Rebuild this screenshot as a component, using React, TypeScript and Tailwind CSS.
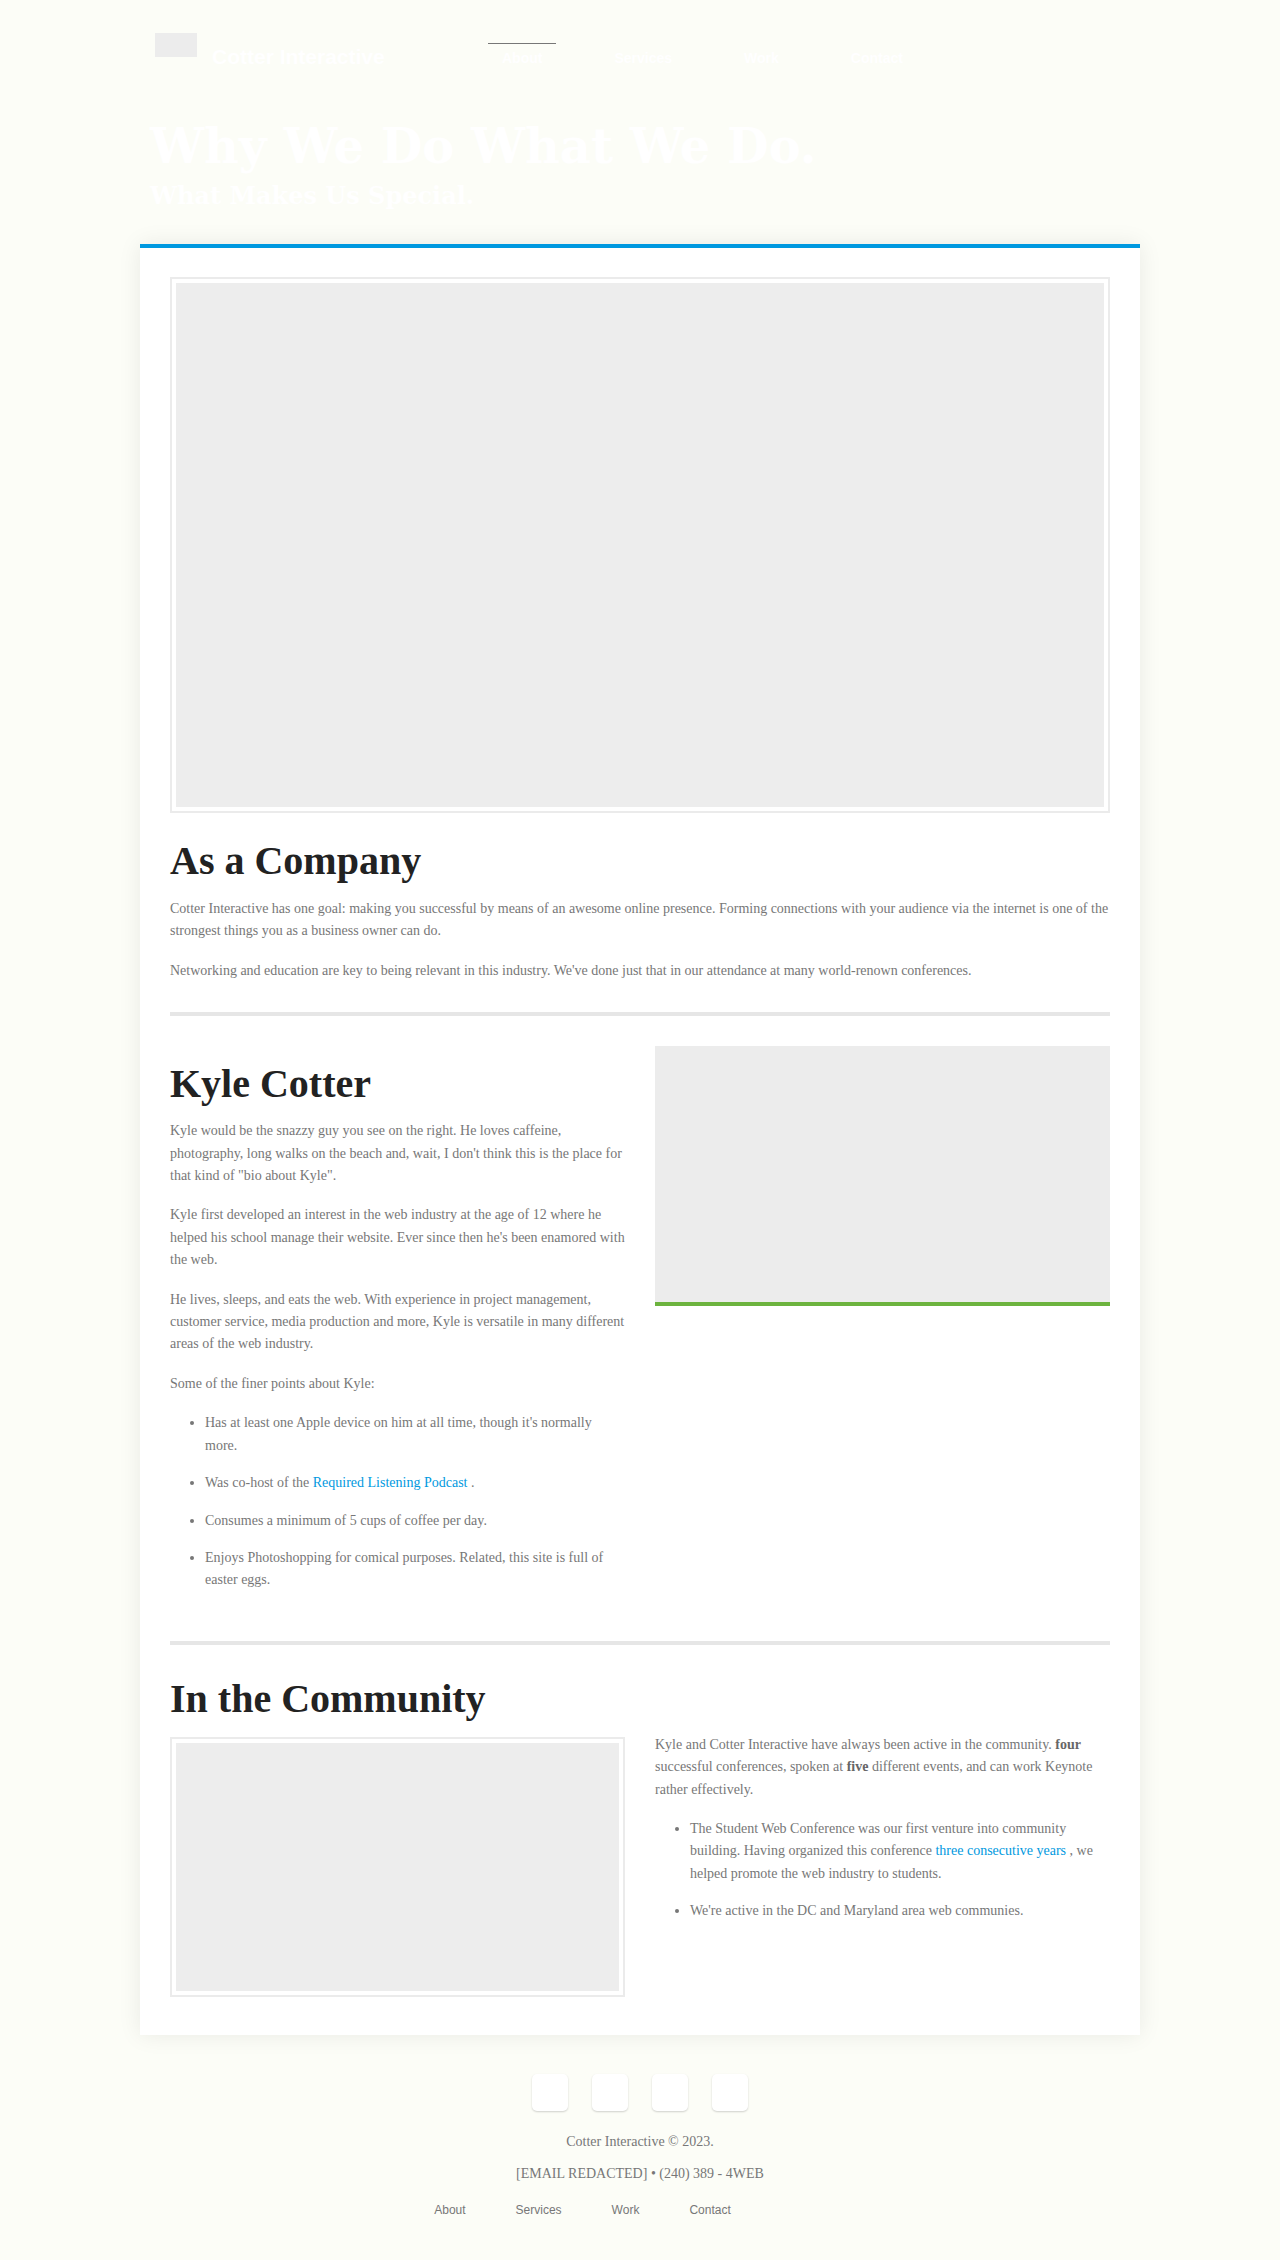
import React from "react";

const navItems = ["About", "Services", "Work", "Contact"];

const para = "text-[14px] leading-[22.4px] text-[#777]";
const heading = "text-[40px] leading-[48px] font-bold text-[#222]";

const Frame: React.FC<{ h: string }> = ({ h }) => (
  <div className="border-2 border-[#ebebeb] bg-white p-1">
    <div className={`${h} w-full bg-[#ededed]`}></div>
  </div>
);

const App: React.FC = () => {
  return (
    <div className="min-h-screen bg-[#fcfdf7] font-['Liberation_Serif',serif]">
      {/* header */}
      <header className="mx-auto flex h-[70px] w-[1000px] items-start pt-[33px] pl-[15px]">
        <div className="h-[24px] w-[42px] bg-[#ececec]"></div>
        <span className="ml-[15px] mt-[12px] w-[208px] font-['Liberation_Sans',sans-serif] text-[21px] font-bold leading-[24px] text-white">
          Cotter Interactive
        </span>
        <nav className="ml-[68px] mt-[10px] flex gap-[44px] font-['Liberation_Sans',sans-serif] text-[14px] font-bold leading-[16px] text-white">
          {navItems.map((item, i) => (
            <a
              key={item}
              className={
                i === 0
                  ? "border-t border-[#777] px-[14px] pt-[6px]"
                  : "border-t border-transparent px-[14px] pt-[6px]"
              }
            >
              {item}
            </a>
          ))}
        </nav>
      </header>

      {/* hero */}
      <div className="mx-auto w-[1000px] pl-[10px] pt-[52px] font-['DejaVu_Serif',serif] text-white">
        <h1 className="h-[48px] text-[48px] font-bold leading-[48px]">Why We Do What We Do.</h1>
        <h2 className="mt-[14px] h-[24px] text-[24px] font-bold leading-[24px]">What Makes Us Special.</h2>
      </div>

      {/* card */}
      <main className="mx-auto mt-[36px] w-[1000px] border-t-4 border-[#0099e0] bg-white px-[30px] pb-[38px] pt-[29px] shadow-[0_0_22px_rgba(0,0,0,0.08)]">
        <Frame h="h-[524px]" />

        <h2 className={`${heading} mt-[24px] mb-[13px]`}>As a Company</h2>
        <p className={`${para} mb-[17px]`}>
          Cotter Interactive has one goal: making you successful by means of an awesome online presence. Forming
          connections with your audience via the internet is one of the strongest things you as a business owner can do.
        </p>
        <p className={para}>
          Networking and education are key to being relevant in this industry. We've done just that in our attendance at
          many world-renown conferences.
        </p>

        <div className="my-[30px] h-[4px] bg-[#e6e6e6]"></div>

        <section className="grid grid-cols-2 items-start gap-[30px]">
          <div>
            <h2 className={`${heading} mt-[14px] mb-[12px]`}>Kyle Cotter</h2>
            <p className={`${para} mb-[17px]`}>
              Kyle would be the snazzy guy you see on the right. He loves caffeine, photography, long walks on the beach
              and, wait, I don't think this is the place for that kind of "bio about Kyle".
            </p>
            <p className={`${para} mb-[17px]`}>
              Kyle first developed an interest in the web industry at the age of 12 where he helped his school manage
              their website. Ever since then he's been enamored with the web.
            </p>
            <p className={`${para} mb-[17px]`}>
              He lives, sleeps, and eats the web. With experience in project management, customer service, media
              production and more, Kyle is versatile in many different areas of the web industry.
            </p>
            <p className={`${para} mb-[17px]`}>Some of the finer points about Kyle:</p>
            <ul className={`${para} list-disc pl-[35px] pr-[15px]`}>
              <li className="mb-[15px]">Has at least one Apple device on him at all time, though it's normally more.</li>
              <li className="mb-[15px]">
                Was co-host of the <a className="text-[#0099e0]">Required Listening Podcast</a> .
              </li>
              <li className="mb-[15px]">Consumes a minimum of 5 cups of coffee per day.</li>
              <li>Enjoys Photoshopping for comical purposes. Related, this site is full of easter eggs.</li>
            </ul>
          </div>
          <div className="h-[260px] border-b-4 border-[#6cb33e] bg-[#ececec]"></div>
        </section>

        <div className="mt-[49px] mb-[30px] h-[4px] bg-[#e6e6e6]"></div>

        <h2 className={`${heading} mb-[14px]`}>In the Community</h2>
        <section className="grid grid-cols-2 items-start gap-[30px]">
          <Frame h="h-[248px]" />
          <div className="-mt-[3px]">
            <p className={`${para} mb-[17px]`}>
              Kyle and Cotter Interactive have always been active in the community. <b className="text-[#666]">four</b>{" "}
              successful conferences, spoken at <b className="text-[#666]">five</b> different events, and can work
              Keynote rather effectively.
            </p>
            <ul className={`${para} list-disc pl-[35px] pr-[15px]`}>
              <li className="mb-[15px]">
                The Student Web Conference was our first venture into community building. Having organized this
                conference <a className="text-[#0099e0]">three consecutive years</a> , we helped promote the web
                industry to students.
              </li>
              <li>We're active in the DC and Maryland area web communies.</li>
            </ul>
          </div>
        </section>
      </main>

      {/* footer */}
      <footer className="pb-[44px] pt-[39px] text-center">
        <div className="flex justify-center gap-[24px]">
          {[0, 1, 2, 3].map((n) => (
            <div
              key={n}
              className="h-[37px] w-[36px] rounded-[5px] bg-white shadow-[0_1px_2px_rgba(0,0,0,0.18)]"
            ></div>
          ))}
        </div>
        <p className="mt-[20px] text-[14px] leading-[22px] text-[#777]">Cotter Interactive © 2023.</p>
        <p className="mt-[10px] text-[14px] leading-[22px] text-[#777]">[EMAIL REDACTED] • (240) 389 - 4WEB</p>
        <nav className="mt-[17px] flex justify-center gap-[50px] pr-[115px] font-['Liberation_Sans',sans-serif] text-[12px] leading-[16px] text-[#777]">
          {navItems.map((item) => (
            <a key={item}>{item}</a>
          ))}
        </nav>
      </footer>
    </div>
  );
};

export default App;
